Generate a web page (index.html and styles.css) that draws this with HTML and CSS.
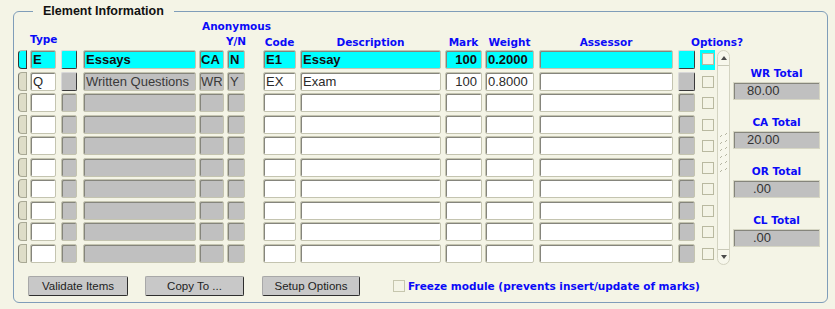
FILE: index.html
```html
<!DOCTYPE html>
<html lang="en">
  <head>
    <meta charset="UTF-8">
    <title>Element Information</title>
    <link rel="stylesheet" href="styles.css">
  </head>
  <body>
    <fieldset class="panel">
      <legend class="legend">Element Information</legend>
      <div class="main">
        <div class="table">
          <div class="head">
            <div class="c-ind"></div>
            <div class="c-type lbl lbl-type">Type</div>
            <div class="c-sq"></div>
            <div class="c-name"></div>
            <div class="c-cat lbl lbl-anon">Anonymous</div>
            <div class="c-yn lbl lbl-yn">Y/N</div>
            <div class="c-code lbl">Code</div>
            <div class="c-desc lbl">Description</div>
            <div class="c-mark lbl">Mark</div>
            <div class="c-wt lbl">Weight</div>
            <div class="c-ass lbl">Assessor</div>
            <div class="c-sq2 lbl lbl-opt">Options?</div>
          </div>
          <div class="rows">
            <div class="row current">
              <div class="c-ind ind"></div>
              <div class="c-type f">E</div>
              <div class="c-sq sq raised"></div>
              <div class="c-name f">Essays</div>
              <div class="c-cat f">CA</div>
              <div class="c-yn f">N</div>
              <div class="c-code f">E1</div>
              <div class="c-desc f">Essay</div>
              <div class="c-mark f num">100</div>
              <div class="c-wt f">0.2000</div>
              <div class="c-ass f"></div>
              <div class="c-sq2 sq raised"></div>
              <div class="c-chk chk"><span class="box"></span></div>
            </div>
            <div class="row">
              <div class="c-ind ind"></div>
              <div class="c-type f">Q</div>
              <div class="c-sq sq raised"></div>
              <div class="c-name f ro">Written Questions</div>
              <div class="c-cat f ro">WR</div>
              <div class="c-yn f ro">Y</div>
              <div class="c-code f">EX</div>
              <div class="c-desc f">Exam</div>
              <div class="c-mark f num">100</div>
              <div class="c-wt f">0.8000</div>
              <div class="c-ass f"></div>
              <div class="c-sq2 sq raised"></div>
              <div class="c-chk chk"><span class="box"></span></div>
            </div>
            <div class="row">
              <div class="c-ind ind"></div><div class="c-type f"></div><div class="c-sq f ro"></div><div class="c-name f ro"></div><div class="c-cat f ro"></div><div class="c-yn f ro"></div>
              <div class="c-code f"></div><div class="c-desc f"></div><div class="c-mark f"></div><div class="c-wt f"></div><div class="c-ass f"></div><div class="c-sq2 f ro"></div>
              <div class="c-chk chk"><span class="box"></span></div>
            </div>
            <div class="row">
              <div class="c-ind ind"></div><div class="c-type f"></div><div class="c-sq f ro"></div><div class="c-name f ro"></div><div class="c-cat f ro"></div><div class="c-yn f ro"></div>
              <div class="c-code f"></div><div class="c-desc f"></div><div class="c-mark f"></div><div class="c-wt f"></div><div class="c-ass f"></div><div class="c-sq2 f ro"></div>
              <div class="c-chk chk"><span class="box"></span></div>
            </div>
            <div class="row">
              <div class="c-ind ind"></div><div class="c-type f"></div><div class="c-sq f ro"></div><div class="c-name f ro"></div><div class="c-cat f ro"></div><div class="c-yn f ro"></div>
              <div class="c-code f"></div><div class="c-desc f"></div><div class="c-mark f"></div><div class="c-wt f"></div><div class="c-ass f"></div><div class="c-sq2 f ro"></div>
              <div class="c-chk chk"><span class="box"></span></div>
            </div>
            <div class="row">
              <div class="c-ind ind"></div><div class="c-type f"></div><div class="c-sq f ro"></div><div class="c-name f ro"></div><div class="c-cat f ro"></div><div class="c-yn f ro"></div>
              <div class="c-code f"></div><div class="c-desc f"></div><div class="c-mark f"></div><div class="c-wt f"></div><div class="c-ass f"></div><div class="c-sq2 f ro"></div>
              <div class="c-chk chk"><span class="box"></span></div>
            </div>
            <div class="row">
              <div class="c-ind ind"></div><div class="c-type f"></div><div class="c-sq f ro"></div><div class="c-name f ro"></div><div class="c-cat f ro"></div><div class="c-yn f ro"></div>
              <div class="c-code f"></div><div class="c-desc f"></div><div class="c-mark f"></div><div class="c-wt f"></div><div class="c-ass f"></div><div class="c-sq2 f ro"></div>
              <div class="c-chk chk"><span class="box"></span></div>
            </div>
            <div class="row">
              <div class="c-ind ind"></div><div class="c-type f"></div><div class="c-sq f ro"></div><div class="c-name f ro"></div><div class="c-cat f ro"></div><div class="c-yn f ro"></div>
              <div class="c-code f"></div><div class="c-desc f"></div><div class="c-mark f"></div><div class="c-wt f"></div><div class="c-ass f"></div><div class="c-sq2 f ro"></div>
              <div class="c-chk chk"><span class="box"></span></div>
            </div>
            <div class="row">
              <div class="c-ind ind"></div><div class="c-type f"></div><div class="c-sq f ro"></div><div class="c-name f ro"></div><div class="c-cat f ro"></div><div class="c-yn f ro"></div>
              <div class="c-code f"></div><div class="c-desc f"></div><div class="c-mark f"></div><div class="c-wt f"></div><div class="c-ass f"></div><div class="c-sq2 f ro"></div>
              <div class="c-chk chk"><span class="box"></span></div>
            </div>
            <div class="row">
              <div class="c-ind ind"></div><div class="c-type f"></div><div class="c-sq f ro"></div><div class="c-name f ro"></div><div class="c-cat f ro"></div><div class="c-yn f ro"></div>
              <div class="c-code f"></div><div class="c-desc f"></div><div class="c-mark f"></div><div class="c-wt f"></div><div class="c-ass f"></div><div class="c-sq2 f ro"></div>
              <div class="c-chk chk"><span class="box"></span></div>
            </div>
          </div>
        </div>
        <div class="scroll">
          <div class="arrow up"></div>
          <svg class="grip" width="9" height="46" viewBox="0 0 9 46">
            <path d="M1 6l2-2M6 4l2-2M1 13l2-2M6 11l2-2M1 20l2-2M6 18l2-2M1 27l2-2M6 25l2-2M1 34l2-2M6 32l2-2M1 41l2-2M6 39l2-2" stroke="#b5b5a2" stroke-width="1" fill="none"/>
          </svg>
          <div class="arrow down"></div>
        </div>
        <div class="totals">
          <div class="tot">
            <div class="tot-lbl">WR Total</div>
            <div class="tot-val">80.00</div>
          </div>
          <div class="tot">
            <div class="tot-lbl">CA Total</div>
            <div class="tot-val">20.00</div>
          </div>
          <div class="tot">
            <div class="tot-lbl">OR Total</div>
            <div class="tot-val frac">.00</div>
          </div>
          <div class="tot">
            <div class="tot-lbl">CL Total</div>
            <div class="tot-val frac">.00</div>
          </div>
        </div>
      </div>
      <div class="actions">
        <button class="btn">Validate Items</button>
        <button class="btn btn-copy">Copy To ...</button>
        <button class="btn btn-setup">Setup Options</button>
        <label class="freeze"><span class="box"></span>Freeze module (prevents insert/update of marks)</label>
      </div>
    </fieldset>
  </body>
</html>
```

FILE: styles.css
```css
body {
  margin: 0;
  background-color: #f4f4e6;
  font-family: "Liberation Sans", Arial, sans-serif;
  color: #222;
}
.panel {
  box-sizing: border-box;
  width: 815px;
  height: 299px;
  margin: 4px 0 0 13px;
  padding: 0 6px 0 4px;
  border: 1px solid #7f9db9;
  border-radius: 6px;
}
.legend {
  margin-left: 15px;
  padding: 0 10px;
  font-weight: bold;
  font-size: 12.5px;
  line-height: 14px;
  color: #111;
}
.main {
  display: flex;
}
.table {
  width: 697px;
}
.head {
  display: flex;
  height: 32px;
}
.head > div {
  display: flex;
  flex-direction: column;
  justify-content: flex-end;
  white-space: nowrap;
}
.lbl {
  font-family: "DejaVu Sans", sans-serif;
  font-weight: bold;
  font-size: 10.5px;
  line-height: 14px;
  color: #0a0af8;
  text-align: center;
  padding-bottom: 1px;
  box-sizing: border-box;
}
.lbl-type {
  padding-bottom: 4px;
}
.lbl-anon {
  text-align: left;
  padding-left: 3px;
  padding-bottom: 17px;
}
.lbl-yn {
  padding-bottom: 2px;
  align-items: center;
}
.lbl-opt {
  text-align: left;
  padding-left: 13px;
}
.rows {
  display: flex;
  flex-direction: column;
  gap: 2.5px;
}
.row {
  display: flex;
  height: 19px;
}
.row > div {
  box-sizing: border-box;
  height: 19px;
  flex-shrink: 0;
}

/* column widths */
.c-ind { width: 9px; }
.c-type { width: 26px; margin-left: 3px; }
.c-sq { width: 16px; margin-left: 5px; }
.c-name { width: 113px; margin-left: 6px; }
.c-cat { width: 25px; margin-left: 3px; }
.c-yn { width: 18px; margin-left: 3px; }
.c-code { width: 33px; margin-left: 18px; }
.c-desc { width: 141px; margin-left: 4px; }
.c-mark { width: 37px; margin-left: 4px; }
.c-wt { width: 49px; margin-left: 3px; }
.c-ass { width: 134px; margin-left: 5px; }
.c-sq2 { width: 17px; margin-left: 5px; }
.c-chk { width: 15px; margin-left: 5px; }

.f {
  background-color: #fff;
  border: 1px solid #c4c4b0;
  border-radius: 2px;
  box-shadow: inset 1px 1px 0 #85857c;
  padding: 0 1px 0 2px;
  font-size: 13px;
  line-height: 17px;
  white-space: nowrap;
  overflow: hidden;
  color: #2a2a2a;
}
.f.ro {
  background-color: #c0c0c0;
  color: #3a3a3a;
}
.f.c-cat {
  padding: 0 0 0 1px;
}
.num {
  text-align: right;
  padding-right: 4px;
}
.ind {
  background-color: #deddc8;
  border: 1px solid #a9a995;
  border-left-color: #77776c;
  border-radius: 4px 0 0 4px;
}
.sq {
  background-color: #c0c0c0;
  border: 1px solid;
  border-color: #d8d8d8 #3a3a3a #3a3a3a #d8d8d8;
  border-radius: 2px;
}
.chk {
  padding: 4px 0 0 2px;
}
.box {
  display: block;
  box-sizing: border-box;
  width: 12px;
  height: 12px;
  border: 1px solid #b9b9a0;
  background-color: #f4f4e6;
}
.current .f,
.current .sq,
.current .ind,
.current .chk {
  background-color: #00ffff;
  font-weight: bold;
  color: #111;
}
.current .ind {
  border-color: #bcbcaa #333 #333 #333;
}
.current .chk {
  padding: 3px 0 0 2px;
  height: 20px;
}
.scroll {
  box-sizing: border-box;
  position: relative;
  width: 13px;
  height: 215px;
  margin: 32px 0 0 2px;
  border: 1px solid #d3d3c1;
  border-radius: 7px;
  background-color: #f7f7ec;
}
.arrow {
  height: 14px;
  border-bottom: 1px solid #c9c9b8;
  display: flex;
  justify-content: center;
  align-items: center;
}
.arrow::before {
  content: "";
  border-left: 3px solid transparent;
  border-right: 3px solid transparent;
}
.up::before {
  border-bottom: 4px solid #4a4a4a;
}
.down {
  position: absolute;
  bottom: 0;
  left: 0;
  right: 0;
  border-bottom: none;
  border-top: 1px solid #c9c9b8;
}
.down::before {
  border-top: 4px solid #4a4a4a;
}
.grip {
  display: block;
  margin: 65px 0 0 1px;
}
.totals {
  width: 87px;
  margin-left: 3px;
  padding-top: 48px;
  display: flex;
  flex-direction: column;
  gap: 15px;
}
.tot {
  display: flex;
  flex-direction: column;
  gap: 2px;
}
.tot-lbl {
  font-family: "DejaVu Sans", sans-serif;
  font-weight: bold;
  font-size: 10.5px;
  line-height: 14px;
  color: #0a0af8;
  text-align: center;
}
.tot-val {
  box-sizing: border-box;
  height: 18px;
  background-color: #c0c0c0;
  border: 1px solid #d6d6c4;
  box-shadow: inset 1px 1px 0 #85857c;
  padding-left: 13px;
  font-size: 13px;
  line-height: 16px;
  color: #333;
}
.tot-val.frac {
  padding-left: 19px;
}
.actions {
  display: flex;
  align-items: center;
  margin: 11px 0 0 10px;
}
.btn {
  box-sizing: border-box;
  width: 100px;
  height: 20px;
  padding: 0;
  background-color: #c8c8c8;
  border: 1px solid;
  border-color: #a8a8a8 #2e2e2e #2e2e2e #a8a8a8;
  border-radius: 2px;
  font-family: "Liberation Sans", Arial, sans-serif;
  font-size: 11.5px;
  color: #222;
}
.btn-copy {
  width: 99px;
  margin-left: 17px;
}
.btn-setup {
  width: 98px;
  margin-left: 18px;
}
.freeze {
  display: flex;
  align-items: center;
  gap: 3px;
  margin-left: 33px;
  font-family: "DejaVu Sans", sans-serif;
  font-weight: bold;
  font-size: 10.5px;
  color: #0a0af8;
}
.freeze .box {
  border-color: #c6c6ae;
}
```
